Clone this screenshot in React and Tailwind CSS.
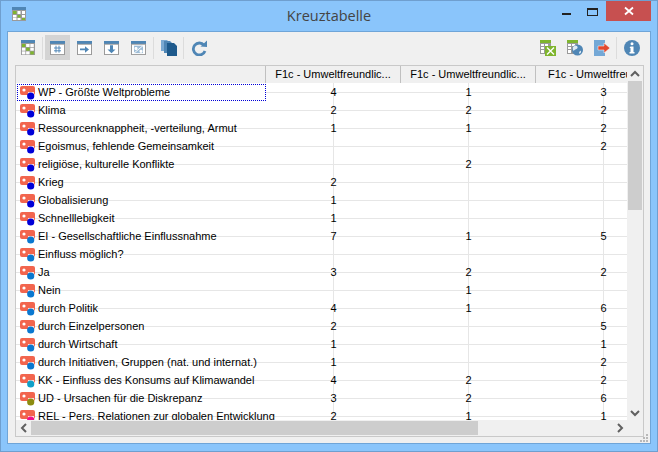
import React from 'react';

const ROWS = [
  ['WP - Größte Weltprobleme', '4', '1', '3', '#0000d8'],
  ['Klima', '2', '2', '2', '#0000d8'],
  ['Ressourcenknappheit, -verteilung, Armut', '1', '1', '2', '#0000d8'],
  ['Egoismus, fehlende Gemeinsamkeit', '', '', '2', '#0000d8'],
  ['religiöse, kulturelle Konflikte', '', '2', '', '#0000d8'],
  ['Krieg', '2', '', '', '#0000d8'],
  ['Globalisierung', '1', '', '', '#0000d8'],
  ['Schnelllebigkeit', '1', '', '', '#0000d8'],
  ['EI - Gesellschaftliche Einflussnahme', '7', '1', '5', '#0a78d0'],
  ['Einfluss möglich?', '', '', '', '#0a78d0'],
  ['Ja', '3', '2', '2', '#0a78d0'],
  ['Nein', '', '1', '', '#0a78d0'],
  ['durch Politik', '4', '1', '6', '#0a78d0'],
  ['durch Einzelpersonen', '2', '', '5', '#0a78d0'],
  ['durch Wirtschaft', '1', '', '1', '#0a78d0'],
  ['durch Initiativen, Gruppen (nat. und internat.)', '1', '', '2', '#0a78d0'],
  ['KK - Einfluss des Konsums auf Klimawandel', '4', '2', '2', '#10a0c8'],
  ['UD - Ursachen für die Diskrepanz', '3', '2', '6', '#8c8c10'],
  ['REL - Pers. Relationen zur globalen Entwicklung', '2', '1', '1', '#f0108c'],
];

function CodeIcon({ color }) {
  return (
    <svg width="16" height="16" viewBox="0 0 16 16" className="shrink-0">
      <rect x="1" y="1" width="15" height="9" rx="2" fill="#f2654e" />
      <circle cx="5" cy="5" r="1.6" fill="#fff" />
      <path d="M9 7h6v2H9z" fill="#fff" fillOpacity="0.8" />
      <circle cx="11.700" cy="11" r="3.600" fill={color} />
    </svg>
  );
}

function GridIcon() {
  return (
    <svg width="14" height="15" viewBox="0 0 15 15" preserveAspectRatio="none">
      <rect width="15" height="3" fill="#4f86b5" />
      <rect y="3" width="15" height="12" fill="#9a9a9a" />
      {[0, 1, 2].map((r) =>
        [0, 1, 2].map((c) => (
          <rect
            key={r + '-' + c}
            x={1 + c * 4.5}
            y={4 + r * 3.7}
            width="3.7"
            height="3"
            fill={(r === 0 && c === 0) || (r === 1 && c === 1) || (r === 2 && c === 2) ? '#7fb52e' : '#fff'}
          />
        ))
      )}
    </svg>
  );
}

function PageIcon({ children }) {
  return (
    <svg width="15" height="14" viewBox="0 0 15 15" preserveAspectRatio="none">
      <rect y="0" width="15" height="15" fill="#9a9a9a" />
      <rect width="15" height="3" fill="#4f86b5" />
      <rect x="1" y="4" width="13" height="10" fill="#fff" />
      {children}
    </svg>
  );
}

function CopyIcon() {
  return (
    <svg width="16" height="16" viewBox="0 0 16 16">
      <path d="M0 0h6l2 2v9H0z" fill="#7aa9d2" />
      <path d="M3 1h6l2 2v10H3z" fill="#4f86b5" />
      <path d="M6 3h7l3 3v10H6z" fill="#1e5a8c" />
    </svg>
  );
}

function RedoIcon() {
  return (
    <svg width="16" height="16" viewBox="0 0 16 16">
      <path d="M13 5.200A6 6 0 1 0 14 11" fill="none" stroke="#4f86b5" strokeWidth="2.800" />
      <path d="M9.500 6.500 16 7V.5z" fill="#4f86b5" />
    </svg>
  );
}

function ExcelIcon() {
  return (
    <svg width="16" height="16" viewBox="0 0 16 16">
      <rect width="11" height="3" fill="#7fb52e" />
      <path d="M0 3h11v11H0z" fill="#9a9a9a" />
      <path d="M1 4h3v2H1zM5 4h3v2H5zM1 7h3v2H1zM1 10h3v3H1z" fill="#fff" />
      <rect x="5" y="6" width="11" height="10" fill="#7fb52e" />
      <path d="M7 7.500l7 7M14 7.500l-7 7" stroke="#fff" strokeWidth="1.400" />
    </svg>
  );
}

function GlobeIcon() {
  return (
    <svg width="16" height="16" viewBox="0 0 16 16">
      <rect width="11" height="3" fill="#7fb52e" />
      <path d="M0 3h11v11H0z" fill="#9a9a9a" />
      <path d="M1 4h3v2H1zM5 4h3v2H5zM1 7h3v2H1zM1 10h3v3H1z" fill="#fff" />
      <circle cx="10.500" cy="10" r="5.500" fill="#4f86b5" />
      <path d="M8 5.500c2 0 3 1 2.500 2.500S8 9 7 10.500 5.500 8 6 7zM12 12l2-1.500v2L12.500 14z" fill="#dfeaf3" />
    </svg>
  );
}

function ExitIcon() {
  return (
    <svg width="16" height="16" viewBox="0 0 16 16">
      <rect x="0" y="0" width="11" height="16" fill="#74a8d6" />
      <path d="M4 6h6V3l6 5-6 5v-3H4z" fill="#e2492f" stroke="#fff" strokeWidth="0.500" />
    </svg>
  );
}

function InfoIcon() {
  return (
    <svg width="16" height="16" viewBox="0 0 16 16">
      <circle cx="8" cy="8" r="8" fill="#4f86b5" />
      <circle cx="8" cy="3.800" r="1.500" fill="#fff" />
      <path d="M6.500 6.500h3V12h1v1.500h-5V12h1V8h-1z" fill="#fff" />
    </svg>
  );
}

function Btn({ active, children }) {
  return (
    <div className={'flex h-[25px] w-[27px] items-center justify-center' + (active ? ' bg-[linear-gradient(#d4d4d4,#d4d4d4)] bg-[length:25px_25px] bg-center bg-no-repeat' : '')}>
      {children}
    </div>
  );
}

function Sep() {
  return <div className="mx-px h-[22px] w-px bg-[#dcdcdc]" />;
}

function HeaderCell({ w, children }) {
  return (
    <div className="flex h-full shrink-0 items-center justify-center overflow-hidden whitespace-nowrap border-r border-[#c0c0c0] text-center" style={{ width: w }}>
      {children}
    </div>
  );
}

function NumCell({ children }) {
  return (
    <div className="flex h-full w-[135px] shrink-0 items-center justify-center bg-[linear-gradient(#e6e6e6,#e6e6e6)] bg-[length:1px_100%] bg-[position:50%_0] bg-no-repeat">
      {children}
    </div>
  );
}

function Chevron({ d }) {
  return (
    <svg width="10" height="10" viewBox="0 0 10 10">
      <path d={d} fill="none" stroke="#606060" strokeWidth="2" />
    </svg>
  );
}

export default function App() {
  return (
    <div className="flex h-[452px] w-[658px] flex-col overflow-hidden border border-[#6f9fcf] bg-[#8ac5fb] font-['Liberation_Sans',sans-serif] text-[11px] text-black">
      <div className="grid h-[30px] shrink-0 grid-cols-[1fr_auto_1fr] items-start">
        <div className="pl-[11px] pt-[6px]">
          <svg width="14" height="14" viewBox="0 0 14 14">
            <rect width="14" height="14" fill="#9a9a9a" />
            <rect width="14" height="3" fill="#4f86b5" />
            <path d="M1 4h3.500v3H1zM5.500 8h3v2.500h-3zM10 11h3v2h-3z" fill="#7fb52e" />
            <path d="M5.500 4h3v3h-3zM10 4h3v3h-3zM1 8h3.500v2.500H1zM10 8h3v2.500h-3zM1 11h3.500v2H1zM5.500 11h3v2h-3z" fill="#fff" />
          </svg>
        </div>
        <div className="pt-[5px] font-['Open_Sans',sans-serif] text-[14.500px] leading-[20px] text-[#444]">Kreuztabelle</div>
        <div className="flex items-start justify-end pr-[6px]">
          <div className="mr-[16px] mt-[12px] h-[2px] w-[9px] bg-[#222]" />
          <div className="mr-[8px] mt-[7px] h-[8px] w-[11px] border border-t-2 border-[#222]" />
          <div className="flex h-[20px] w-[45px] items-center justify-center bg-[#c75050]">
            <svg width="10" height="10" viewBox="0 0 10 10">
              <path d="M1 1.500l8 7M9 1.500l-8 7" stroke="#fff" strokeWidth="1.800" />
            </svg>
          </div>
        </div>
      </div>

      <div className="relative mx-[6px] mb-[7px] flex min-h-0 flex-1 flex-col border border-[#6fa5d8] bg-[#f0f0f0] pb-[6px]">
        <div className="flex h-[31px] shrink-0 items-center pl-[6px] pr-[5px]">
          <Btn><GridIcon /></Btn>
          <Sep />
          <Btn active>
            <PageIcon>
              <path d="M4 7.500h7M4 10.500h7M6 5v7.500M9 5v7.500" stroke="#4f86b5" strokeWidth="1" />
            </PageIcon>
          </Btn>
          <Btn>
            <PageIcon>
              <path d="M3 8h5V5.500L12 9l-4 3.500V10H3z" fill="#4f86b5" />
            </PageIcon>
          </Btn>
          <Btn>
            <PageIcon>
              <path d="M6 4.500h3V9h2.500l-4 4-4-4H6z" fill="#4f86b5" />
            </PageIcon>
          </Btn>
          <Btn>
            <PageIcon>
              <path d="M3 5h9v8H3z" fill="#9fbdd6" />
              <path d="M3 13l9-8M4 7h2v2H4zM9 10h2v2H9z" stroke="#fff" strokeWidth="1" fill="#fff" />
            </PageIcon>
          </Btn>
          <Sep />
          <Btn><CopyIcon /></Btn>
          <Sep />
          <Btn><RedoIcon /></Btn>
          <div className="flex-1" />
          <Btn><ExcelIcon /></Btn>
          <Btn><GlobeIcon /></Btn>
          <Btn><ExitIcon /></Btn>
          <Sep />
          <Btn><InfoIcon /></Btn>
        </div>

        <div className="ml-[7px] mr-[6px] mt-[2px] flex min-h-0 flex-1 flex-col border border-[#c9c9c9]">
          <div className="flex min-h-0 flex-1">
            <div className="flex min-w-0 flex-1 flex-col overflow-hidden">
              <div className="flex h-[17px] shrink-0">
                <HeaderCell w={250}></HeaderCell>
                <HeaderCell w={135}>F1c - Umweltfreundlic...</HeaderCell>
                <HeaderCell w={135}>F1c - Umweltfreundlic...</HeaderCell>
                <div className="flex flex-1 items-center overflow-hidden whitespace-nowrap pl-[12px]">F1c - Umweltfreundlic...</div>
              </div>
              <div className="min-h-0 flex-1 overflow-hidden bg-white">
                {ROWS.map((row, i) => (
                  <div key={i} className="flex h-[18px] bg-[linear-gradient(#e6e6e6,#e6e6e6)] bg-[length:100%_1px] bg-[position:0_9px] bg-no-repeat">
                    <div className={'ml-px mt-px flex h-[17px] w-[249px] shrink-0 items-center gap-[3px] whitespace-nowrap border pl-px' + (i === 0 ? ' border-dotted border-[#0000d8] bg-white' : ' border-transparent')}>
                      <CodeIcon color={row[4]} />
                      <span>{row[0]}</span>
                    </div>
                    <NumCell>{row[1]}</NumCell>
                    <NumCell>{row[2]}</NumCell>
                    <NumCell>{row[3]}</NumCell>
                  </div>
                ))}
              </div>
            </div>
            <div className="flex w-[16px] shrink-0 flex-col items-center">
              <div className="flex h-[15px] items-center justify-center"><Chevron d="M1 7l4-4 4 4" /></div>
              <div className="h-[129px] w-[14px] bg-[#cdcdcd]" />
              <div className="flex-1" />
              <div className="flex h-[15px] items-center justify-center"><Chevron d="M1 3l4 4 4-4" /></div>
            </div>
          </div>
          <div className="flex h-[16px] shrink-0 items-center">
            <div className="flex w-[15px] justify-center"><Chevron d="M7 1L3 5l4 4" /></div>
            <div className="h-[14px] w-[447px] bg-[#cdcdcd]" />
            <div className="flex-1" />
            <div className="flex w-[15px] justify-center"><Chevron d="M3 1l4 4-4 4" /></div>
            <div className="w-[16px]" />
          </div>
        </div>

        <svg width="8" height="8" viewBox="0 0 8 8" className="absolute bottom-px right-[2px]">
          <path d="M6 0h2v2H6zM3 3h2v2H3zM6 3h2v2H6zM0 6h2v2H0zM3 6h2v2H3zM6 6h2v2H6z" fill="#b8b8b8" />
        </svg>
      </div>
    </div>
  );
}
